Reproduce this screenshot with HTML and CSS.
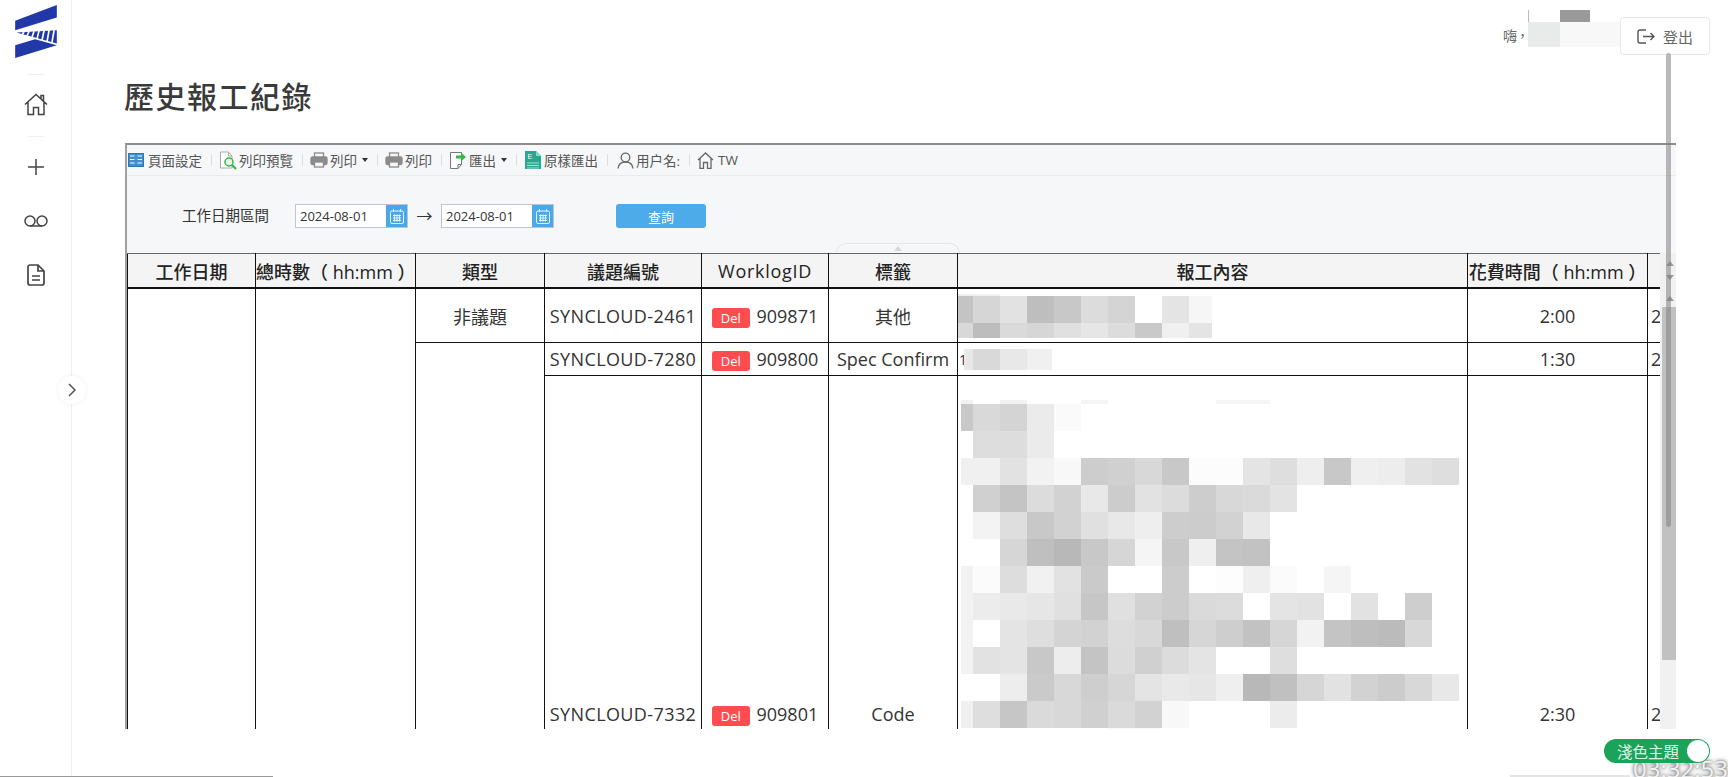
FILE: index.html
```html
<!doctype html>
<html lang="zh-Hant">
<head>
    <meta charset="utf-8">
    <meta name="viewport" content="width=device-width, initial-scale=1">
    <title>歷史報工紀錄</title>
    <link rel="stylesheet" href="styles.css">
</head>

<body>

    <aside class="sidebar">
        <div class="logo">
            <svg width="42" height="53" viewBox="46 15 124 158">
                <polygon fill="#2038a8" points="46,62 170,15 170,52 46,90"/>
                <polygon fill="#2038a8" points="50,97 170,90 170,130"/>
                <g stroke="#fff" stroke-width="5">
                    <line x1="72" y1="95" x2="66" y2="106"/>
                    <line x1="87" y1="94" x2="80" y2="110"/>
                    <line x1="102" y1="93" x2="95" y2="115"/>
                    <line x1="117" y1="92" x2="110" y2="120"/>
                    <line x1="132" y1="91" x2="125" y2="125"/>
                    <line x1="147" y1="90" x2="140" y2="130"/>
                    <line x1="162" y1="90" x2="155" y2="130"/>
                </g>
                <polygon fill="#2038a8" points="46,135 105,117 170,135 46,173"/>
            </svg>
        </div>
        <div class="nav-line"></div>
        <div class="nav-item nav-home">
            <svg width="24" height="23" viewBox="0 0 24 23" class="nav-icon">
                <path d="M1 11.500 12 1.500l11 10M4 9v12.500h5.500v-7h5v7H20V9M17 5.500V2.500h2.500v5.500"/>
            </svg>
        </div>
        <div class="nav-line"></div>
        <div class="nav-list">
            <div class="nav-item">
                <svg width="16" height="16" viewBox="0 0 16 16" class="nav-icon"><path d="M8 0v16M0 8h16"/></svg>
            </div>
            <div class="nav-item">
                <svg width="24" height="12" viewBox="0 0 24 12" class="nav-icon">
                    <circle cx="6" cy="6" r="5"/><circle cx="18" cy="6" r="5"/><path d="M6 11h12"/>
                </svg>
            </div>
            <div class="nav-item">
                <svg width="18" height="22" viewBox="0 0 18 22" class="nav-icon nav-doc">
                    <path d="M3 1h8l6 6v12a2 2 0 0 1-2 2H3a2 2 0 0 1-2-2V3a2 2 0 0 1 2-2zM11 1v6h6M5 12h8M5 16h8"/>
                </svg>
            </div>
        </div>
    </aside>

    <button class="collapse">
        <svg width="10" height="14" viewBox="0 0 10 14"><path d="M2 1l6 6-6 6"/></svg>
    </button>

    <main class="main">
        <header class="topbar">
            <span class="greet">嗨，</span>
            <span class="redact"><span class="redact-a"></span><span class="redact-b"></span></span>
            <button class="logout">
                <svg width="18" height="15" viewBox="0 0 18 15">
                    <path d="M9 1H3a2 2 0 0 0-2 2v9a2 2 0 0 0 2 2h6M6 7.500h11M13.500 4l3.500 3.500-3.500 3.500"/>
                </svg>
                登出
            </button>
        </header>

        <h1 class="title">歷史報工紀錄</h1>

        <section class="report">
            <div class="toolbar">
                <span class="tool tool-first">
                    <svg width="16" height="14" viewBox="0 0 16 14">
                        <rect x=".5" y=".5" width="15" height="13" fill="#3f8fcf" stroke="#2b78b5"/>
                        <path d="M2 3h4.500M2 6.500h4.500M2 10h4.500M9.500 3H14M9.500 6.500H14M9.500 10H14" stroke="#fff" stroke-width="1.200"/>
                    </svg>
                    頁面設定
                </span>
                <span class="sep"></span>
                <span class="tool">
                    <svg width="18" height="19" viewBox="0 0 18 19">
                        <path d="M1.500 1h8l3.500 4v12h-11.500z" fill="#fff" stroke="#aaa"/>
                        <path d="M9.500 1v4h3.500" fill="none" stroke="#aaa"/>
                        <circle cx="10" cy="11" r="4" fill="#e6f6e6" stroke="#39b54a" stroke-width="1.500"/>
                        <path d="M13 14l4 4" stroke="#39b54a" stroke-width="2.200"/>
                    </svg>
                    列印預覽
                </span>
                <span class="sep"></span>
                <span class="tool">
                    <svg width="18" height="16" viewBox="0 0 18 16" class="i-print">
                        <rect x="4.500" y="1" width="9" height="5" class="i-paper"/>
                        <rect x="1" y="5" width="16" height="7.500" rx="1.500"/>
                        <rect x="4.500" y="10" width="9" height="5" class="i-paper"/>
                    </svg>
                    列印<i class="caret"></i>
                </span>
                <span class="sep"></span>
                <span class="tool">
                    <svg width="18" height="16" viewBox="0 0 18 16" class="i-print">
                        <rect x="4.500" y="1" width="9" height="5" class="i-paper"/>
                        <rect x="1" y="5" width="16" height="7.500" rx="1.500"/>
                        <rect x="4.500" y="10" width="9" height="5" class="i-paper"/>
                    </svg>
                    列印
                </span>
                <span class="sep"></span>
                <span class="tool">
                    <svg width="18" height="19" viewBox="0 0 18 19">
                        <path d="M1.500 1.500h11v12l-3.500 4H1.500z" fill="#fff" stroke="#777"/>
                        <path d="M9 13.500v4M9 13.500h3.500" fill="none" stroke="#777"/>
                        <path d="M7 4.500h5V1.500l5 4.500-5 4.500V7.500H7z" fill="#3bb54a"/>
                    </svg>
                    匯出<i class="caret"></i>
                </span>
                <span class="sep"></span>
                <span class="tool">
                    <svg width="18" height="18" viewBox="0 0 18 18">
                        <path d="M1 0h11l5 5v13H1z" fill="#2aa58e"/>
                        <path d="M12 0l5 5h-5z" fill="#8fd6c8"/>
                        <path d="M3 12h12M3 14.500h12M3 17h12" stroke="#a8e0d4" stroke-width="1"/>
                        <text x="3.500" y="8" class="i-e">E</text>
                    </svg>
                    原樣匯出
                </span>
                <span class="sep"></span>
                <span class="tool tool-user">
                    <svg width="17" height="17" viewBox="0 0 17 17" class="i-line">
                        <circle cx="8.500" cy="5.500" r="4.300"/><path d="M1 16.500c.5-4 3-6.500 7.500-6.500s7 2.500 7.500 6.500"/>
                    </svg>
                    用户名:
                </span>
                <span class="sep"></span>
                <span class="tool tool-home">
                    <svg width="17" height="17" viewBox="0 0 17 17" class="i-line">
                        <path d="M1 8l7.500-7L16 8M3 6.500v10h3.500v-6h4v6H14v-10"/>
                    </svg>
                    TW
                </span>
            </div>

            <div class="filter">
                <span class="filter-label">工作日期區間</span>
                <div class="date">
                    <span class="date-value">2024-08-01</span>
                    <span class="date-btn">
                        <svg width="14" height="15" viewBox="0 0 14 15" class="i-cal">
                            <rect x=".5" y="2" width="13" height="12.500" rx="1.500"/>
                            <path d="M3.500 0v3M10.500 0v3M3 6.500h8M3 9h8M3 11.500h8M4.500 5.500v7M7 5.500v7M9.500 5.500v7"/>
                        </svg>
                    </span>
                </div>
                <span class="arrow">→</span>
                <div class="date">
                    <span class="date-value">2024-08-01</span>
                    <span class="date-btn">
                        <svg width="14" height="15" viewBox="0 0 14 15" class="i-cal">
                            <rect x=".5" y="2" width="13" height="12.500" rx="1.500"/>
                            <path d="M3.500 0v3M10.500 0v3M3 6.500h8M3 9h8M3 11.500h8M4.500 5.500v7M7 5.500v7M9.500 5.500v7"/>
                        </svg>
                    </span>
                </div>
                <button class="query">查詢</button>
                <div class="hint"></div>
            </div>

            <div class="table-area">
                <div class="table-wrap">
                    <table class="log">
                        <colgroup>
                            <col class="c-date"><col class="c-total"><col class="c-type"><col class="c-issue">
                            <col class="c-id"><col class="c-tag"><col class="c-body"><col class="c-time"><col class="c-more">
                        </colgroup>
                        <thead>
                            <tr>
                                <th>工作日期</th>
                                <th>總時數（ hh:mm ）</th>
                                <th>類型</th>
                                <th>議題編號</th>
                                <th class="th-id">WorklogID</th>
                                <th>標籤</th>
                                <th>報工內容</th>
                                <th>花費時間（ hh:mm ）</th>
                                <th></th>
                            </tr>
                        </thead>
                        <tbody>
                            <tr class="r1">
                                <td rowspan="3"></td>
                                <td rowspan="3"></td>
                                <td>非議題</td>
                                <td class="issue">SYNCLOUD-2461</td>
                                <td><span class="del">Del</span> 909871</td>
                                <td>其他</td>
                                <td class="body-cell">
                                    <svg class="mosaic" width="254" height="44">
                                        <rect x="0" y="0" width="15" height="2" fill="#eee"/><rect x="15" y="0" width="239" height="2" fill="#f0f0f0"/>
                                        <rect x="0" y="2" width="15" height="27" fill="#c4c4c4"/><rect x="15" y="2" fill="#d6d6d6"/><rect x="42" y="2" fill="#e2e2e2"/><rect x="69" y="2" fill="#bebebe"/><rect x="96" y="2" fill="#c8c8c8"/><rect x="123" y="2" fill="#dcdcdc"/><rect x="150" y="2" fill="#d4d4d4"/><rect x="204" y="2" fill="#e4e4e4"/><rect x="231" y="2" width="23" height="27" fill="#f6f6f6"/>
                                        <rect x="0" y="29" width="15" height="15" fill="#d8d8d8"/><rect x="15" y="29" height="15" fill="#bdbdbd" class="low"/><rect x="42" y="29" fill="#dadada" class="low"/><rect x="69" y="29" fill="#d6d6d6" class="low"/><rect x="96" y="29" fill="#e0e0e0" class="low"/><rect x="123" y="29" fill="#e6e6e6" class="low"/><rect x="150" y="29" fill="#dcdcdc" class="low"/><rect x="177" y="29" fill="#c9c9c9" class="low"/><rect x="204" y="29" fill="#f0f0f0" class="low"/><rect x="231" y="29" width="23" height="15" fill="#e4e4e4"/>
                                    </svg>
                                </td>
                                <td>2:00</td>
                                <td class="more">2:00</td>
                            </tr>
                            <tr class="r2">
                                <td rowspan="2"></td>
                                <td class="issue">SYNCLOUD-7280</td>
                                <td><span class="del">Del</span> 909800</td>
                                <td>Spec Confirm</td>
                                <td class="body-cell">
                                    <div class="line-two">
                                        <span class="lead">1</span>
                                        <svg class="mosaic" width="88" height="21">
                                            <rect x="0" y="0" width="9" height="21" fill="#e8e8e8"/><rect x="9" y="0" height="21" fill="#d9d9d9" class="mid"/><rect x="36" y="0" fill="#e8e8e8" class="mid"/><rect x="63" y="0" width="25" height="21" fill="#f0f0f0"/>
                                        </svg>
                                    </div>
                                </td>
                                <td>1:30</td>
                                <td class="more">2:00</td>
                            </tr>
                            <tr class="r3">
                                <td class="issue">SYNCLOUD-7332</td>
                                <td><span class="del">Del</span> 909801</td>
                                <td>Code</td>
                                <td class="body-cell body-long">
                                    <svg class="mosaic mosaic-long" width="498" height="334">
                                        <g class="strip">
                                            <rect class="edge" y="0" fill="#f2f2f2"/><rect x="39" y="0" fill="#f2f2f2"/><rect x="120" y="0" fill="#f5f5f5"/><rect x="255" y="0" fill="#f5f5f5"/><rect x="282" y="0" fill="#f5f5f5"/>
                                        </g>
                                        <rect class="edge" y="4" fill="#c8c8c8"/><rect x="12" y="4" fill="#d9d9d9"/><rect x="39" y="4" fill="#d4d4d4"/><rect x="66" y="4" fill="#ebebeb"/><rect x="93" y="4" fill="#fafafa"/>
                                        <rect x="12" y="31" fill="#ddd"/><rect x="39" y="31" fill="#ddd"/><rect x="66" y="31" fill="#ebebeb"/>
                                        <rect class="edge" y="58" fill="#f0f0f0"/><rect x="12" y="58" fill="#f0f0f0"/><rect x="39" y="58" fill="#e2e2e2"/><rect x="66" y="58" fill="#f2f2f2"/><rect x="93" y="58" fill="#f8f8f8"/><rect x="120" y="58" fill="#cdcdcd"/><rect x="147" y="58" fill="#d0d0d0"/><rect x="174" y="58" fill="#d8d8d8"/><rect x="201" y="58" fill="#c8c8c8"/><rect x="228" y="58" fill="#fcfcfc"/><rect x="255" y="58" fill="#fcfcfc"/><rect x="282" y="58" fill="#e4e4e4"/><rect x="309" y="58" fill="#dedede"/><rect x="336" y="58" fill="#eee"/><rect x="363" y="58" fill="#c8c8c8"/><rect x="390" y="58" fill="#efefef"/><rect x="417" y="58" fill="#ededed"/><rect x="444" y="58" fill="#e2e2e2"/><rect x="471" y="58" fill="#dedede"/>
                                        <rect x="12" y="85" fill="#d0d0d0"/><rect x="39" y="85" fill="#c4c4c4"/><rect x="66" y="85" fill="#dcdcdc"/><rect x="93" y="85" fill="#d2d2d2"/><rect x="120" y="85" fill="#e8e8e8"/><rect x="147" y="85" fill="#ccc"/><rect x="174" y="85" fill="#e2e2e2"/><rect x="201" y="85" fill="#dcdcdc"/><rect x="228" y="85" fill="#cdcdcd"/><rect x="255" y="85" fill="#d8d8d8"/><rect x="282" y="85" fill="#dadada"/><rect x="309" y="85" fill="#e3e3e3"/>
                                        <rect x="12" y="112" fill="#f3f3f3"/><rect x="39" y="112" fill="#dedede"/><rect x="66" y="112" fill="#c8c8c8"/><rect x="93" y="112" fill="#d2d2d2"/><rect x="120" y="112" fill="#e0e0e0"/><rect x="147" y="112" fill="#e8e8e8"/><rect x="174" y="112" fill="#eee"/><rect x="201" y="112" fill="#cdcdcd"/><rect x="228" y="112" fill="#ccc"/><rect x="255" y="112" fill="#d2d2d2"/><rect x="282" y="112" fill="#e8e8e8"/>
                                        <rect x="39" y="139" fill="#d6d6d6"/><rect x="66" y="139" fill="#bfbfbf"/><rect x="93" y="139" fill="#b8b8b8"/><rect x="120" y="139" fill="#c8c8c8"/><rect x="147" y="139" fill="#d6d6d6"/><rect x="174" y="139" fill="#f5f5f5"/><rect x="201" y="139" fill="#c8c8c8"/><rect x="228" y="139" fill="#efefef"/><rect x="255" y="139" fill="#c4c4c4"/><rect x="282" y="139" fill="#c2c2c2"/>
                                        <rect class="edge" y="166" fill="#f2f2f2"/><rect x="12" y="166" fill="#fbfbfb"/><rect x="39" y="166" fill="#ddd"/><rect x="66" y="166" fill="#f1f1f1"/><rect x="93" y="166" fill="#e2e2e2"/><rect x="120" y="166" fill="#cacaca"/><rect x="201" y="166" fill="#ccc"/><rect x="255" y="166" fill="#fdfdfd"/><rect x="282" y="166" fill="#efefef"/><rect x="309" y="166" fill="#fbfbfb"/><rect x="363" y="166" fill="#f5f5f5"/>
                                        <rect class="edge" y="193" fill="#f2f2f2"/><rect x="12" y="193" fill="#ececec"/><rect x="39" y="193" fill="#e9e9e9"/><rect x="66" y="193" fill="#e6e6e6"/><rect x="93" y="193" fill="#e0e0e0"/><rect x="120" y="193" fill="#c6c6c6"/><rect x="147" y="193" fill="#e0e0e0"/><rect x="174" y="193" fill="#d2d2d2"/><rect x="201" y="193" fill="#ccc"/><rect x="228" y="193" fill="#dadada"/><rect x="255" y="193" fill="#dcdcdc"/><rect x="309" y="193" fill="#e4e4e4"/><rect x="336" y="193" fill="#e2e2e2"/><rect x="390" y="193" fill="#e2e2e2"/><rect x="444" y="193" fill="#cecece"/>
                                        <rect class="edge" y="220" fill="#f2f2f2"/><rect x="39" y="220" fill="#e4e4e4"/><rect x="66" y="220" fill="#dedede"/><rect x="93" y="220" fill="#d4d4d4"/><rect x="120" y="220" fill="#d2d2d2"/><rect x="147" y="220" fill="#ddd"/><rect x="174" y="220" fill="#d8d8d8"/><rect x="201" y="220" fill="#bfbfbf"/><rect x="228" y="220" fill="#d6d6d6"/><rect x="255" y="220" fill="#cecece"/><rect x="282" y="220" fill="#c2c2c2"/><rect x="309" y="220" fill="#d6d6d6"/><rect x="336" y="220" fill="#f2f2f2"/><rect x="363" y="220" fill="#c4c4c4"/><rect x="390" y="220" fill="#bebebe"/><rect x="417" y="220" fill="#bbb"/><rect x="444" y="220" fill="#d8d8d8"/>
                                        <rect class="edge" y="247" fill="#f2f2f2"/><rect x="12" y="247" fill="#e2e2e2"/><rect x="39" y="247" fill="#e4e4e4"/><rect x="66" y="247" fill="#c8c8c8"/><rect x="93" y="247" fill="#ededed"/><rect x="120" y="247" fill="#c4c4c4"/><rect x="147" y="247" fill="#dcdcdc"/><rect x="174" y="247" fill="#d0d0d0"/><rect x="201" y="247" fill="#dcdcdc"/><rect x="228" y="247" fill="#e4e4e4"/><rect x="309" y="247" fill="#dedede"/>
                                        <rect x="39" y="274" fill="#ededed"/><rect x="66" y="274" fill="#cacaca"/><rect x="93" y="274" fill="#d8d8d8"/><rect x="120" y="274" fill="#cecece"/><rect x="147" y="274" fill="#d6d6d6"/><rect x="174" y="274" fill="#e4e4e4"/><rect x="201" y="274" fill="#e9e9e9"/><rect x="228" y="274" fill="#e6e6e6"/><rect x="255" y="274" fill="#efefef"/><rect x="282" y="274" fill="#b8b8b8"/><rect x="309" y="274" fill="#c0c0c0"/><rect x="336" y="274" fill="#d6d6d6"/><rect x="363" y="274" fill="#e2e2e2"/><rect x="390" y="274" fill="#d2d2d2"/><rect x="417" y="274" fill="#ccc"/><rect x="444" y="274" fill="#d8d8d8"/><rect x="471" y="274" fill="#e8e8e8"/>
                                        <rect class="edge" y="301" fill="#f0f0f0"/><rect x="12" y="301" fill="#dedede"/><rect x="39" y="301" fill="#c6c6c6"/><rect x="66" y="301" fill="#dadada"/><rect x="93" y="301" fill="#d8d8d8"/><rect x="120" y="301" fill="#d0d0d0"/><rect x="147" y="301" fill="#dadada"/><rect x="174" y="301" fill="#d2d2d2"/><rect x="201" y="301" fill="#f8f8f8"/><rect x="309" y="301" fill="#ececec"/>
                                        <g class="strip">
                                            <rect x="147" y="328" fill="#f8f8f8"/><rect x="174" y="328" fill="#f8f8f8"/>
                                        </g>
                                    </svg>
                                </td>
                                <td>2:30</td>
                                <td class="more">2:00</td>
                            </tr>
                        </tbody>
                    </table>
                </div>
                <div class="track">
                    <i class="tri-up"></i>
                    <i class="tri-down"></i>
                    <i class="tri-up"></i>
                    <div class="thumb"></div>
                </div>
            </div>
        </section>
    </main>

    <div class="page-scroll"></div>

    <div class="theme">
        <span>淺色主題</span>
        <i class="knob"></i>
    </div>
    <div class="clock">03:32:53</div>
    <div class="foot-line"></div>
    <div class="foot-faint"></div>

</body>

</html>
```

FILE: styles.css
```css
html,
body {
    height: 100%;
}

body {
    margin: 0;
    display: flex;
    height: 777px;
    overflow: hidden;
    background-color: #fff;
    font-family: "Open Sans", "Noto Sans CJK TC", sans-serif;
    color: #333;
}

button {
    font-family: inherit;
    cursor: pointer;
}

/* sidebar */

.sidebar {
    flex: 0 0 71px;
    height: 777px;
    border-right: 1px solid #eeeef1;
    display: flex;
    flex-direction: column;
    align-items: center;
}

.logo {
    height: 74px;
    padding-top: 5px;
    box-sizing: border-box;
    margin-left: 1px;
}

.nav-line {
    width: 16px;
    height: 1px;
    background-color: #f0f0f0;
}

.nav-item {
    height: 54px;
    display: flex;
    align-items: center;
    justify-content: center;
}

.nav-home {
    height: 61px;
    box-sizing: border-box;
    padding-bottom: 2px;
}

.nav-list {
    padding-top: 3px;
}

.nav-icon {
    fill: none;
    stroke: #444;
    stroke-width: 1.5;
}

.nav-doc {
    stroke-width: 1.7;
}

.collapse {
    position: absolute;
    left: 58px;
    top: 376px;
    width: 28px;
    height: 28px;
    padding: 0;
    border: 0;
    border-radius: 50%;
    background-color: #fff;
    box-shadow: 0 0 4px rgba(0, 0, 0, .07);
    display: flex;
    align-items: center;
    justify-content: center;
}

.collapse svg {
    fill: none;
    stroke: #555;
    stroke-width: 1.5;
}

/* main */

.main {
    flex: 1;
    padding-left: 53px;
    min-width: 0;
}

.topbar {
    display: flex;
    justify-content: flex-end;
    align-items: center;
    height: 38px;
    padding: 17px 18px 0 0;
}

.greet {
    font-size: 14px;
    letter-spacing: -1.500px;
    color: #666;
    padding-bottom: 2px;
}

.redact {
    display: flex;
    position: relative;
    height: 25px;
    margin-bottom: 3px;
}

.redact::before {
    content: "";
    position: absolute;
    left: 0;
    top: -12px;
    width: 1px;
    height: 12px;
    background-color: #bbb;
}

.redact::after {
    content: "";
    position: absolute;
    left: 32px;
    top: -12px;
    width: 30px;
    height: 12px;
    background-color: #999;
}

.redact-a {
    width: 32px;
    background-color: #e9ebea;
}

.redact-b {
    width: 60px;
    background-color: #f8f8f8;
}

.logout {
    width: 90px;
    height: 38px;
    padding: 0;
    border: 1px solid #e8e8e8;
    border-radius: 4px;
    background-color: #fff;
    font-size: 15px;
    color: #666;
    display: flex;
    align-items: center;
    justify-content: center;
    gap: 8px;
}

.logout svg {
    fill: none;
    stroke: #555;
    stroke-width: 1.4;
}

.title {
    margin: 22px 0 26px -1px;
    font-size: 30px;
    line-height: 40px;
    font-weight: 500;
    letter-spacing: 1.500px;
    color: #3a3a3a;
}

/* report frame */

.report {
    width: 1551px;
    height: 586px;
    box-sizing: border-box;
    border-top: 2px solid #8c8c8c;
    border-left: 2px solid #a0a0a0;
    background-color: #f6f7f9;
    display: flex;
    flex-direction: column;
}

.toolbar {
    height: 31px;
    box-sizing: border-box;
    border-bottom: 1px solid #eaeaea;
    display: flex;
    align-items: center;
    padding-left: 1px;
    font-size: 13.500px;
    color: #555;
}

.tool {
    display: flex;
    align-items: center;
    gap: 2px;
    white-space: nowrap;
}

.tool-first {
    gap: 4px;
}

.tool-user svg {
    margin-left: 2px;
}

.tool-home {
    gap: 4px;
}

.sep {
    width: 1px;
    height: 12px;
    margin: 0 7px 0 9px;
    background-color: #ddd;
}

.caret {
    width: 0;
    height: 0;
    margin: 0 0 0 3px;
    border: 3.500px solid transparent;
    border-top: 4px solid #333;
    border-bottom: 0;
}

.i-print {
    fill: #8b8b8b;
    stroke: #8b8b8b;
    stroke-width: 1.300;
}

.i-print .i-paper {
    fill: #f6f7f9;
}

.i-line {
    fill: none;
    stroke: #666;
    stroke-width: 1.3;
}

.i-e {
    font-size: 7px;
    font-family: "Liberation Sans", sans-serif;
    fill: #fff;
}

.filter {
    position: relative;
    height: 77px;
    box-sizing: border-box;
    padding: 28px 0 0 55px;
    display: flex;
    align-items: flex-start;
    font-size: 13px;
    color: #333;
}

.filter-label {
    width: 113px;
    line-height: 24px;
    font-size: 14.500px;
}

.date {
    width: 113px;
    height: 24px;
    box-sizing: border-box;
    border: 1px solid #bcc4d2;
    background-color: #fff;
    display: flex;
}

.date-value {
    flex: 1;
    padding-left: 4px;
    line-height: 22px;
}

.date-btn {
    width: 21px;
    background-color: #4aa8e8;
    display: flex;
    align-items: center;
    justify-content: center;
}

.i-cal {
    fill: none;
    stroke: #e4f3fd;
    stroke-width: 1;
}

.arrow {
    width: 33px;
    text-align: center;
    line-height: 24px;
    font-size: 16px;
}

.query {
    width: 90px;
    height: 24px;
    margin-left: 62px;
    padding: 0;
    border: 0;
    border-radius: 3px;
    background-color: #4dabea;
    color: #fff;
    font-size: 13px;
}

.hint {
    position: absolute;
    left: 709px;
    bottom: 0;
    width: 124px;
    height: 10px;
    box-sizing: border-box;
    border: 1px solid #e6e6e6;
    border-bottom: 0;
    border-radius: 10px 10px 0 0;
}

.hint::after {
    content: "";
    position: absolute;
    left: 57px;
    top: 2px;
    border: 4px solid transparent;
    border-top: 0;
    border-bottom: 5px solid #d8d8d8;
}

/* table */

.table-area {
    flex: 1;
    min-height: 0;
    display: flex;
}

.table-wrap {
    width: 1533px;
    overflow: hidden;
    background-color: #fff;
}

.log {
    table-layout: fixed;
    width: 1620px;
    border-collapse: collapse;
    font-size: 18px;
    color: #333;
}

.c-date { width: 128px; }
.c-total { width: 160px; }
.c-type { width: 129px; }
.c-issue { width: 157px; }
.c-id { width: 127px; }
.c-tag { width: 129px; }
.c-body { width: 510px; }
.c-time { width: 180px; }
.c-more { width: 200px; }

.log th,
.log td {
    border: 1px solid #111;
    padding: 0;
    text-align: center;
    white-space: nowrap;
    overflow: hidden;
}

.log th {
    height: 33px;
    border-top-color: #666;
    border-bottom-width: 2px;
    background-color: #f4f4f4;
    font-size: 18px;
    font-weight: 500;
    color: #222;
}

.log .th-id {
    letter-spacing: .7px;
}

.r1 td {
    height: 53px;
}

.r2 td {
    height: 32px;
}

.r3 td {
    height: 651px;
}

.log .issue {
    letter-spacing: .4px;
}

.del {
    display: inline-block;
    width: 38px;
    height: 20px;
    margin-right: 2px;
    border-radius: 3px;
    background-color: #ff4d4f;
    color: #fff;
    font-size: 13px;
    line-height: 20px;
    vertical-align: 0;
}

.log .body-cell {
    text-align: left;
}

.log .body-long {
    vertical-align: top;
    padding: 24px 0 0 3px;
}

.log .more {
    text-align: left;
    padding-left: 3px;
}

.mosaic {
    display: block;
    shape-rendering: crispEdges;
}

.mosaic rect {
    width: 27px;
    height: 27px;
}

.mosaic .low {
    height: 15px;
}

.mosaic .mid {
    height: 21px;
}

.mosaic .strip rect {
    height: 4px;
}

.mosaic-long .edge {
    width: 12px;
}

.line-two {
    display: flex;
    align-items: center;
    font-size: 14px;
    padding-left: 1px;
}

.lead {
    width: 5px;
}

/* scrollbars */

.track {
    flex: 0 0 16px;
    background-color: #f1f1f1;
    display: flex;
    flex-direction: column;
    align-items: center;
    padding-top: 8px;
}

.tri-up,
.tri-down {
    flex: none;
    width: 0;
    height: 0;
    margin-left: 4px;
    border: 4px solid transparent;
}

.tri-up {
    border-top: 0;
    border-bottom: 5px solid #999;
}

.tri-down {
    border-bottom: 0;
    border-top: 5px solid #999;
    margin-top: 9px;
    margin-bottom: 16px;
}

.thumb {
    flex: none;
    align-self: flex-end;
    width: 14px;
    height: 353px;
    margin-top: 6px;
    background-color: #c1c1c1;
}

.page-scroll {
    position: absolute;
    left: 1666px;
    top: 53px;
    width: 5px;
    height: 474px;
    border-radius: 3px;
    background-color: rgba(128, 128, 128, .55);
}

/* bottom right */

.theme {
    position: absolute;
    left: 1604px;
    top: 739px;
    width: 106px;
    height: 24px;
    box-sizing: border-box;
    padding: 0 1px 0 13px;
    border-radius: 12px;
    background-color: #1ba35a;
    color: #dff5e7;
    font-size: 15.500px;
    display: flex;
    align-items: center;
    justify-content: space-between;
    z-index: 2;
}

.knob {
    width: 22px;
    height: 22px;
    border-radius: 50%;
    background-color: #fff;
}

.clock {
    position: absolute;
    left: 1633px;
    top: 752px;
    font-size: 24px;
    line-height: 34px;
    color: #f2f2f2;
    text-shadow: 0 0 5px #666, 0 0 3px #777;
}

.foot-line {
    position: absolute;
    left: 0;
    bottom: 0;
    width: 273px;
    height: 1px;
    background-color: #999;
}

.foot-faint {
    position: absolute;
    left: 1510px;
    bottom: 0;
    width: 120px;
    height: 2px;
    background-color: #e4e4e4;
}
```
